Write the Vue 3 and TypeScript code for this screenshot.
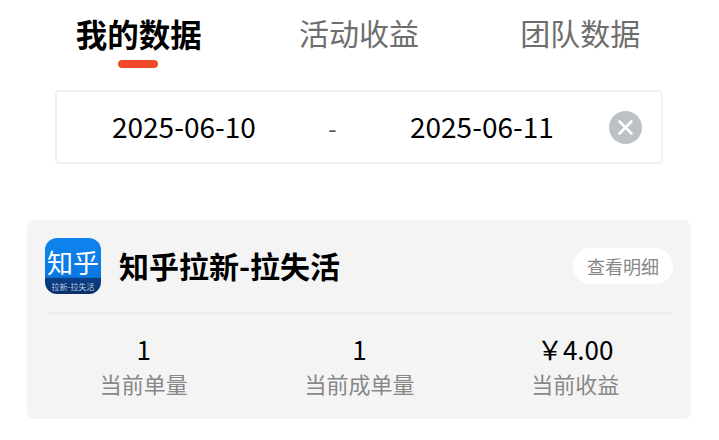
<script setup lang="ts">
interface Stat { value: string; label: string }
const tabs: string[] = ['我的数据', '活动收益', '团队数据']
const stats: Stat[] = [
  { value: '1', label: '当前单量' },
  { value: '1', label: '当前成单量' },
  { value: '￥4.00', label: '当前收益' },
]
</script>

<template>
  <div class="page">
    <nav class="tabs">
      <div v-for="(t, i) in tabs" :key="t" class="tab" :class="{ active: i === 0 }">
        <span>{{ t }}</span>
        <i v-if="i === 0" class="bar"></i>
      </div>
    </nav>

    <div class="range">
      <span class="date">2025-06-10</span>
      <span class="dash">-</span>
      <span class="date">2025-06-11</span>
      <svg class="clear" viewBox="0 0 33 33" width="33" height="33">
        <circle cx="16.5" cy="16.5" r="16.5" fill="#bcc1c6" />
        <path d="M10.5 10.5L22.5 22.5M22.5 10.5L10.5 22.5" stroke="#fff" stroke-width="2.6" stroke-linecap="round" />
      </svg>
    </div>

    <section class="card">
      <header class="head">
        <div class="logo">
          <span class="logo-main">知乎</span>
          <span class="logo-sub">拉新-拉失活</span>
        </div>
        <h2 class="title">知乎拉新-拉失活</h2>
        <button class="detail">查看明细</button>
      </header>
      <div class="stats">
        <div v-for="s in stats" :key="s.label" class="stat">
          <div class="value">{{ s.value }}</div>
          <div class="label">{{ s.label }}</div>
        </div>
      </div>
    </section>
  </div>
</template>

<style>
html, body { margin: 0; background: #fff; }
</style>

<style scoped>
.page {
  width: 719px;
  height: 440px;
  overflow: hidden;
  box-sizing: border-box;
  padding: 0 28px 0 27px;
  font-family: "Noto Sans CJK SC", "Noto Sans", sans-serif;
  color: #000;
}
.tabs {
  display: grid;
  grid-template-columns: repeat(3, 1fr);
  height: 90px;
}
.tab {
  position: relative;
  text-align: center;
  font-size: 30px;
  line-height: 40px;
  padding-top: 12px;
  color: #6e6e6e;
}
.tab.active {
  font-size: 31.5px;
  font-weight: 700;
  line-height: 42px;
  padding-left: 2px;
  color: #000;
}
.bar {
  position: absolute;
  left: 50%;
  top: 60px;
  width: 40px;
  height: 8px;
  margin-left: -20px;
  border-radius: 4px;
  background: #f0492c;
}
.range {
  display: flex;
  align-items: center;
  height: 74px;
  margin: 0 0 56px 28px;
  width: 608px;
  box-sizing: border-box;
  border: 2px solid #f1f1f1;
  border-radius: 4px;
  padding: 0 19px 0 0;
}
.date {
  font-size: 28px;
  line-height: 70px;
  padding-bottom: 2px;
  width: 143px;
  text-align: center;
  white-space: nowrap;
}
.date:first-child { margin-left: 55px; }
.dash {
  font-size: 24px;
  color: #555;
  width: 155px;
  text-align: center;
}
.clear {
  margin-left: auto;
  flex: none;
}
.card {
  height: 199px;
  box-sizing: border-box;
  background: #f4f4f4;
  border-radius: 8px;
  padding: 0 18px;
}
.head {
  position: relative;
  display: flex;
  align-items: center;
  height: 92px;
  border-bottom: 2px solid transparent;
}
.head::after {
  content: "";
  position: absolute;
  left: 2px;
  right: 0;
  bottom: -2px;
  height: 2px;
  background: #ececec;
}
.logo {
  position: relative;
  flex: none;
  width: 56px;
  height: 56px;
  border-radius: 12px;
  overflow: hidden;
  background: linear-gradient(180deg, #0f84ee 0%, #0a78e2 70%, #0b3f86 72%, #0a2f68 100%);
  display: flex;
  flex-direction: column;
  align-items: center;
  color: #fff;
}
.logo-main {
  font-size: 26px;
  line-height: 28px;
  margin-top: 10px;
  letter-spacing: 0;
  white-space: nowrap;
}
.logo-sub {
  font-size: 8px;
  line-height: 9px;
  margin-top: 6px;
  color: #b8cde8;
  white-space: nowrap;
}
.title {
  margin: 0 0 0 18px;
  padding-bottom: 2px;
  font-size: 30px;
  font-weight: 700;
  line-height: 40px;
  flex: 1;
  white-space: nowrap;
}
.detail {
  border: 0;
  background: #fff;
  border-radius: 18px;
  width: 100px;
  height: 36px;
  padding: 0;
  font: inherit;
  font-size: 18px;
  color: #888;
  line-height: 36px;
}
.stats {
  display: grid;
  grid-template-columns: repeat(3, 1fr);
  margin: 0 -18px;
  padding: 0 8px 0 9px;
}
.stat {
  text-align: center;
}
.value {
  font-size: 26px;
  line-height: 36px;
  margin-top: 17px;
}
.label {
  font-size: 22px;
  line-height: 32px;
  color: #888;
}
</style>
